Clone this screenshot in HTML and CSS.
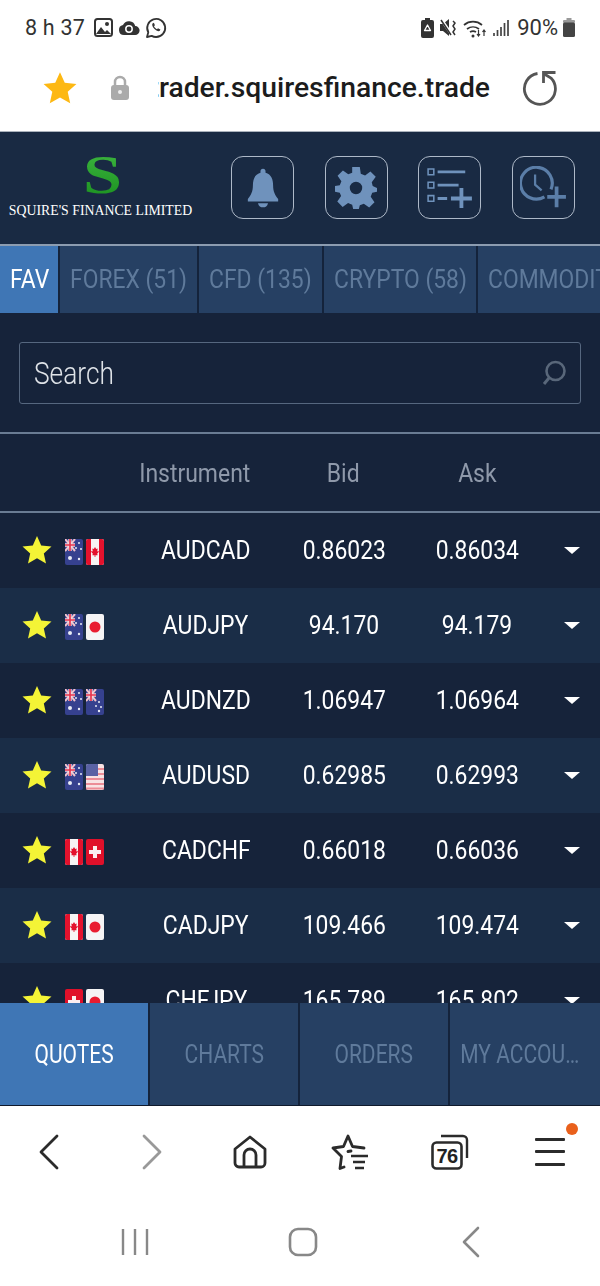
FILE: index.html
```html
<!DOCTYPE html>
<html lang="en">
<head>
<meta charset="utf-8">
<title>Squire's Finance Limited</title>
<link rel="stylesheet" href="styles.css">
</head>
<body>
<svg class="defs" width="0" height="0" aria-hidden="true">
  <defs>
    <symbol id="star" viewBox="0 0 30 30"><path d="M15 1l4.200 9.400 10.300 1.100-7.700 6.900 2.200 10.100L15 23.300 6 28.500l2.200-10.100L.5 11.500l10.300-1.100z"/></symbol>
    <symbol id="au" viewBox="0 0 18 26"><rect width="18" height="26" rx="2" fill="#36418f"/><path d="M0 0l10 12M10 0L0 12" stroke="#f2c4cc" stroke-width="2"/><path d="M5 0v12M0 6h10" stroke="#f4dbe0" stroke-width="3.400"/><path d="M5 0v12M0 6h10" stroke="#e8364f" stroke-width="1.700"/><g fill="#e8ebf5"><circle cx="5" cy="19" r="2"/><circle cx="14" cy="4" r="1"/><circle cx="11" cy="9" r="1"/><circle cx="16" cy="10" r="1"/><circle cx="14" cy="20" r="1.200"/></g></symbol>
    <symbol id="nz" viewBox="0 0 18 26"><rect width="18" height="26" rx="2" fill="#36418f"/><path d="M0 0l10 12M10 0L0 12" stroke="#f2c4cc" stroke-width="2"/><path d="M5 0v12M0 6h10" stroke="#f4dbe0" stroke-width="3.400"/><path d="M5 0v12M0 6h10" stroke="#e8364f" stroke-width="1.700"/><g fill="#e8ebf5"><circle cx="13" cy="13" r="1"/><circle cx="10" cy="17" r="1"/><circle cx="15" cy="18" r="1"/><circle cx="13" cy="22" r="1.200"/></g></symbol>
    <symbol id="ca" viewBox="0 0 18 26"><rect width="18" height="26" rx="2" fill="#f7f5f5"/><path d="M0 2a2 2 0 012-2h3v26H2a2 2 0 01-2-2zM13 0h3a2 2 0 012 2v22a2 2 0 01-2 2h-3z" fill="#e4122d"/><path d="M9 8l1.200 2 1.500-.6-.5 3 1.800-.6-.8 2-1 .8.4 1.600H9.400V18h-.8v-1.800H6.400l.4-1.600-1-.8-.8-2 1.800.6-.5-3 1.500.6z" fill="#e4122d"/></symbol>
    <symbol id="jp" viewBox="0 0 18 26"><rect width="18" height="26" rx="2" fill="#f5f4f5"/><circle cx="9" cy="13" r="5.500" fill="#e91c30"/></symbol>
    <symbol id="ch" viewBox="0 0 18 26"><rect width="18" height="26" rx="2" fill="#e0102a"/><path d="M7 7h4v4h4v4h-4v4H7v-4H3v-4h4z" fill="#fbeef0"/></symbol>
    <symbol id="us" viewBox="0 0 18 26"><rect width="18" height="26" rx="2" fill="#f8e3e4"/><path d="M0 5h18M0 10h18M0 15h18M0 20h18M0 24.500h18" stroke="#ec8d97" stroke-width="2"/><path d="M0 2a2 2 0 012-2h10v12H0z" fill="#5a62a4"/></symbol>
  </defs>
</svg>
<div class="status">
  <div class="status-side left">
    <span class="clock">8 h 37</span>
    <svg class="si" width="19" height="19" viewBox="0 0 19 19"><rect x="1" y="1" width="17" height="17" rx="2.500" fill="none" stroke="#333" stroke-width="2"/><path d="M2 16l5-7 4 5 2-2 4 4z" fill="#333"/><circle cx="13" cy="6" r="2" fill="#333"/></svg>
    <svg class="si" width="22" height="17" viewBox="0 0 22 17"><path d="M6 16a5 5 0 01-1-9.900A6.500 6.500 0 0117.200 7 4.500 4.500 0 0117 16z" fill="#333"/><circle cx="11" cy="10" r="3.200" fill="none" stroke="#fff" stroke-width="1.500"/></svg>
    <svg class="si" width="22" height="22" viewBox="0 0 22 22"><path d="M2 20l1.300-4.700A9 9 0 1111 20a9 9 0 01-4.300-1.100z" fill="none" stroke="#333" stroke-width="1.800" stroke-linejoin="round"/><path d="M7.500 6.500c-1 1.500.5 4 2 5.500s4 2.800 5.300 1.800l.6-1.300-2.400-1.200-1 1c-1-.4-2.500-1.800-3-3l.9-1-1-2.500z" fill="#333"/></svg>
  </div>
  <div class="status-side">
    <svg class="si" width="13" height="20" viewBox="0 0 13 20"><path d="M4 0h5v2h2a2 2 0 012 2v14a2 2 0 01-2 2H2a2 2 0 01-2-2V4a2 2 0 012-2h2z" fill="#333"/><path d="M6.500 7l3 5.500h-6z" fill="none" stroke="#fff" stroke-width="1.300" stroke-linejoin="round"/></svg>
    <svg class="si" width="17" height="19" viewBox="0 0 17 19"><path d="M0 6h3l6-5v17l-6-5H0z" fill="#333"/><path d="M1 1l11 16" fill="none" stroke="#fff" stroke-width="3"/><path d="M1 2l10 15" fill="none" stroke="#333" stroke-width="1.500"/><path d="M13 3l2 2-2 3 2 3-2 3 2 3" fill="none" stroke="#333" stroke-width="1.500"/></svg>
    <svg class="si" width="24" height="20" viewBox="0 0 24 20"><path d="M1 7a14 14 0 0118 0M4 11a10 10 0 0112 0M7 14a5.500 5.500 0 016 0" fill="none" stroke="#333" stroke-width="1.700"/><circle cx="10" cy="18" r="1.500" fill="#333"/><path d="M15.500 12v6M14 16l1.500 2 1.500-2M21 18v-6M19.500 14l1.500-2 1.500 2" fill="none" stroke="#333" stroke-width="1.200"/></svg>
    <svg class="si" width="16" height="18" viewBox="0 0 16 18"><path d="M1 14v3M4.500 11v6M8 8v9M11.500 4v13M15 1v16" stroke="#444" stroke-width="1.700"/></svg>
    <span class="pct">90%</span>
    <svg class="si" width="12" height="19" viewBox="0 0 12 19"><rect x="3.500" width="5" height="3" fill="#999"/><rect y="2" width="12" height="3" rx="1" fill="#999"/><rect y="4.500" width="12" height="14.500" rx="1.500" fill="#444"/></svg>
  </div>
</div>
<div class="urlbar">
  <svg class="fav-star" width="36" height="34" viewBox="0 0 30 30"><use href="#star"/></svg>
  <svg class="lock" width="20" height="26" viewBox="0 0 20 26"><path d="M5 11V7a5 5 0 0110 0v4" fill="none" stroke="#aaa" stroke-width="2.500"/><rect x="1" y="10" width="18" height="15" rx="3" fill="#aaa"/><circle cx="10" cy="17" r="2" fill="#eee"/></svg>
  <div class="url"><span>trader.squiresfinance.trade</span></div>
  <svg class="reload" width="36" height="36" viewBox="0 0 36 36"><path d="M15.500 3.500A15.500 15.500 0 1029 8L21.500 3.500" fill="none" stroke="#555" stroke-width="2.800"/><path d="M33.500 2.500H21.500V13" fill="none" stroke="#555" stroke-width="2.800"/></svg>
</div>
<main class="app">
  <header class="app-head">
    <div class="logo">
      <div class="logo-s">S</div>
      <div class="logo-name">SQUIRE'S FINANCE LIMITED</div>
    </div>
    <div class="tools">
      <button class="tool"><svg width="32" height="42" viewBox="0 0 38 46"><path d="M19 0a3 3 0 013 3v2c7 2 9 8 9 15 0 7 2 11 6 16v3H1v-3c4-5 6-9 6-16 0-7 2-13 9-15V3a3 3 0 013-3zM13 41h12c-1 4-3 5-6 5s-5-1-6-5z" fill="#6f92bc"/></svg></button>
      <button class="tool"><svg width="42" height="42" viewBox="0 0 44 44"><path fill-rule="evenodd" d="M18 0h8l1 7 4.500 1.900 5.600-4.200 5.600 5.600-4.200 5.600L39.500 20l4.500 2v4l-5 1-1.600 4.200 4 5.600-5.600 5.600-5.600-4-4.200 1.600L25 44h-6l-1-4.500-4.300-1.700-5.700 4-5.600-5.600 4-5.700L5 27l-5-1v-6l5-1 1.700-4.200-4-5.600L8.300 3.600l5.600 4L18 6zM22 15.500a6.500 6.500 0 100 13 6.500 6.500 0 000-13z" fill="#6f92bc"/></svg></button>
      <button class="tool"><svg width="46" height="40" viewBox="0 0 48 42"><g fill="none" stroke="#6f92bc"><path d="M1 1h6v6H1zM1 15h6v6H1zM1 29h6v6H1z" stroke-width="1.600"/><path d="M11 4h29M11 18h22M11 32h10" stroke-width="3"/><path d="M25 32h22M36 21v21" stroke-width="4"/></g></svg></button>
      <button class="tool"><svg width="47" height="43" viewBox="0 0 50 46"><g fill="none" stroke="#5b7ea8"><path d="M33 25A17 17 0 1026 33" stroke-width="3.400"/><path d="M16 9v11l7 6" stroke-width="2.400"/><path d="M29 33h20M39 22v22" stroke-width="4"/></g></svg></button>
    </div>
  </header>
  <nav class="tabs">
    <div class="tab on"><span class="c">FAV</span></div>
    <div class="tab"><span class="c">FOREX (51)</span></div>
    <div class="tab"><span class="c">CFD (135)</span></div>
    <div class="tab"><span class="c">CRYPTO (58)</span></div>
    <div class="tab"><span class="c">COMMODITIES (24)</span></div>
  </nav>
  <section class="search-wrap">
    <div class="search">
      <span class="c search-text">Search</span>
      <svg width="28" height="28" viewBox="0 0 28 28"><circle cx="15.500" cy="12" r="9" fill="none" stroke="#59677a" stroke-width="2.600"/><path d="M9 19l-5 6" stroke="#59677a" stroke-width="3"/></svg>
    </div>
  </section>
  <div class="thead">
    <div class="th-instr"><span class="c">Instrument</span></div>
    <div><span class="c">Bid</span></div>
    <div><span class="c">Ask</span></div>
  </div>
  <div class="rows">
    <div class="row">
      <svg class="rstar"><use href="#star"/></svg>
      <div class="flags"><svg class="flag"><use href="#au"/></svg><svg class="flag"><use href="#ca"/></svg></div>
      <div><span class="c">AUDCAD</span></div><div><span class="c">0.86023</span></div><div><span class="c">0.86034</span></div><div class="more"><i class="tri"></i></div>
    </div>
    <div class="row">
      <svg class="rstar"><use href="#star"/></svg>
      <div class="flags"><svg class="flag"><use href="#au"/></svg><svg class="flag"><use href="#jp"/></svg></div>
      <div><span class="c">AUDJPY</span></div><div><span class="c">94.170</span></div><div><span class="c">94.179</span></div><div class="more"><i class="tri"></i></div>
    </div>
    <div class="row">
      <svg class="rstar"><use href="#star"/></svg>
      <div class="flags"><svg class="flag"><use href="#au"/></svg><svg class="flag"><use href="#nz"/></svg></div>
      <div><span class="c">AUDNZD</span></div><div><span class="c">1.06947</span></div><div><span class="c">1.06964</span></div><div class="more"><i class="tri"></i></div>
    </div>
    <div class="row">
      <svg class="rstar"><use href="#star"/></svg>
      <div class="flags"><svg class="flag"><use href="#au"/></svg><svg class="flag"><use href="#us"/></svg></div>
      <div><span class="c">AUDUSD</span></div><div><span class="c">0.62985</span></div><div><span class="c">0.62993</span></div><div class="more"><i class="tri"></i></div>
    </div>
    <div class="row">
      <svg class="rstar"><use href="#star"/></svg>
      <div class="flags"><svg class="flag"><use href="#ca"/></svg><svg class="flag"><use href="#ch"/></svg></div>
      <div><span class="c">CADCHF</span></div><div><span class="c">0.66018</span></div><div><span class="c">0.66036</span></div><div class="more"><i class="tri"></i></div>
    </div>
    <div class="row">
      <svg class="rstar"><use href="#star"/></svg>
      <div class="flags"><svg class="flag"><use href="#ca"/></svg><svg class="flag"><use href="#jp"/></svg></div>
      <div><span class="c">CADJPY</span></div><div><span class="c">109.466</span></div><div><span class="c">109.474</span></div><div class="more"><i class="tri"></i></div>
    </div>
    <div class="row">
      <svg class="rstar"><use href="#star"/></svg>
      <div class="flags"><svg class="flag"><use href="#ch"/></svg><svg class="flag"><use href="#jp"/></svg></div>
      <div><span class="c">CHFJPY</span></div><div><span class="c">165.789</span></div><div><span class="c">165.802</span></div><div class="more"><i class="tri"></i></div>
    </div>
  </div>
  <nav class="bottom-tabs">
    <div class="btab on"><span class="c">QUOTES</span></div>
    <div class="btab"><span class="c">CHARTS</span></div>
    <div class="btab"><span class="c">ORDERS</span></div>
    <div class="btab"><span class="c">MY ACCOU…</span></div>
  </nav>
</main>
<div class="browser-nav">
  <svg class="nav-back" width="20" height="36" viewBox="0 0 20 36"><path d="M18 2L2 18l16 16" fill="none" stroke="#2b2b2b" stroke-width="2.800" stroke-linecap="round" stroke-linejoin="round"/></svg>
  <svg class="nav-fwd" width="20" height="36" viewBox="0 0 20 36"><path d="M2 2l16 16L2 34" fill="none" stroke="#999" stroke-width="2.800" stroke-linecap="round" stroke-linejoin="round"/></svg>
  <svg width="34" height="34" viewBox="0 0 34 34"><path d="M2 14L17 2l15 12v14a4 4 0 01-4 4H6a4 4 0 01-4-4z" fill="none" stroke="#2b2b2b" stroke-width="2.800" stroke-linejoin="round"/><path d="M11 32V20a6 6 0 0112 0v12" fill="none" stroke="#2b2b2b" stroke-width="2.800"/></svg>
  <svg width="38" height="36" viewBox="0 0 38 36"><path d="M20 17l-3 .5M13 33l-4 1.500 1.500-12L2 14l10.500-1.500L17 2l4.500 10.500L33 14" fill="none" stroke="#2b2b2b" stroke-width="2.800" stroke-linecap="round" stroke-linejoin="round"/><path d="M20 22h17M22 28h12M24 34h9" stroke="#2b2b2b" stroke-width="2.600"/></svg>
  <div class="tabcount">
    <svg width="38" height="36" viewBox="0 0 38 36"><path d="M10 2h22a4 4 0 014 4v18" fill="none" stroke="#2b2b2b" stroke-width="2.400"/><rect x="1.500" y="8.500" width="29" height="26" rx="4" fill="#fff" stroke="#2b2b2b" stroke-width="2.600"/></svg>
    <span class="tabnum">76</span>
  </div>
  <div class="menu">
    <i></i><i></i><i></i>
    <b class="dot"></b>
  </div>
</div>
<div class="sys-nav">
  <svg width="28" height="28" viewBox="0 0 28 28"><path d="M2 1v26M14 1v26M26 1v26" stroke="#888" stroke-width="2.400"/></svg>
  <svg width="30" height="30" viewBox="0 0 30 30"><rect x="2" y="2" width="26" height="26" rx="8" fill="none" stroke="#888" stroke-width="2.600"/></svg>
  <svg width="18" height="32" viewBox="0 0 18 32"><path d="M16 2L2 16l14 14" fill="none" stroke="#888" stroke-width="2.600" stroke-linecap="round" stroke-linejoin="round"/></svg>
</div>
</body>
</html>
```
FILE: styles.css
```css
* { box-sizing: border-box; }
html, body { margin: 0; padding: 0; }
body {
  width: 600px;
  height: 1286px;
  overflow: hidden;
  background: #fff;
  font-family: Roboto, "Liberation Sans", sans-serif;
  display: flex;
  flex-direction: column;
}
.defs { position: absolute; }
.c { display: inline-block; transform: scaleX(.88); white-space: nowrap; }

.status {
  height: 52px;
  padding: 3px 25px 0 25px;
  display: flex;
  justify-content: space-between;
  align-items: center;
  color: #333;
  flex: none;
}
.status-side { display: flex; align-items: center; gap: 6px; }
.status-side.left { gap: 5px; }
.clock { font-size: 21.500px; margin-right: 4px; letter-spacing: .2px; }
.pct { font-size: 22px; margin: 0 -1px 0 2px; }
.si { display: block; }

.urlbar {
  height: 79px;
  flex: none;
  padding: 0 42px 8px 42px;
  display: flex;
  align-items: center;
}
.fav-star { fill: #fdb813; flex: none; }
.lock { margin-left: 32px; flex: none; }
.url {
  width: 332px;
  margin-left: 28px;
  overflow: hidden;
  display: flex;
  justify-content: flex-end;
  font-size: 28.300px;
  font-weight: 500;
  color: #1c1c1c;
  white-space: nowrap;
}
.url span { flex: none; }
.reload { margin-left: 32px; flex: none; }

.app {
  flex: none;
  height: 975px;
  display: flex;
  flex-direction: column;
  background: #16233a;
  border-top: 1px solid #aab2bc;
}
.app-head {
  height: 114px;
  flex: none;
  background: #192a43;
  border-bottom: 2px solid #8c9cb0;
  display: flex;
  align-items: flex-start;
}
.logo { width: 201px; flex: none; text-align: center; padding-top: 18px; }
.logo-s {
  font-family: "Liberation Serif", serif;
  font-size: 54px;
  font-weight: 700;
  line-height: 50px;
  height: 52px;
  transform: translateX(2px) scaleX(1.300);
  background: linear-gradient(180deg, #3cb53f, #1a8f1f);
  -webkit-background-clip: text;
  background-clip: text;
  color: transparent;
}
.logo-name {
  font-family: "Liberation Serif", serif;
  font-size: 13.800px;
  line-height: 18px;
  color: #fff;
  white-space: nowrap;
}
.tools { display: flex; gap: 30.500px; padding: 24px 0 0 30px; }
.tool {
  width: 63px;
  height: 63px;
  padding: 0;
  background: transparent;
  border: 1.500px solid #aeb9c8;
  border-radius: 12px;
  display: flex;
  align-items: center;
  justify-content: center;
}

.tabs {
  height: 67px;
  flex: none;
  display: grid;
  grid-template-columns: 58px 137px 123px 152px 1fr;
  gap: 2px;
  background: #14233b;
  overflow: hidden;
}
.tab {
  background: #264063;
  color: #5f7a9b;
  font-size: 26px;
  line-height: 67px;
  padding-left: 10px;
  overflow: hidden;
  white-space: nowrap;
}
.tab .c { transform-origin: left center; }
.tab.on { background: #3f76b5; color: #fff; }

.search-wrap { height: 121px; flex: none; padding: 29px 19px 0; border-bottom: 2px solid #6a7c93; }
.search {
  height: 62px;
  border: 1.500px solid #56677f;
  border-radius: 3px;
  padding: 0 12px 0 14px;
  display: flex;
  align-items: center;
  justify-content: space-between;
}
.search-text { font-size: 31px; font-weight: 300; color: #dfe3e8; transform: scaleX(.85); transform-origin: left center; }

.thead {
  height: 79px;
  flex: none;
  border-bottom: 2px solid #6a7c93;
  display: grid;
  grid-template-columns: 113px 164px 132px 136px 1fr;
  align-items: center;
  font-size: 25.500px;
  color: #8f99aa;
  text-align: center;
}
.th-instr { grid-column: 2; }
.thead .c { transform: scaleX(.9); }

.rows { flex: 1; min-height: 0; overflow: hidden; }
.row {
  height: 75px;
  padding-bottom: 2px;
  display: grid;
  grid-template-columns: 65px 66px 150px 126px 140px 1fr;
  align-items: center;
  background: #16233a;
  color: #fff;
  font-size: 26px;
  text-align: center;
}
.row:nth-child(even) { background: #1a2d47; }
.rstar { width: 30px; height: 30px; fill: #f4f436; margin-left: 22px; }
.flags { display: flex; gap: 3px; margin-top: 4px; }
.flag { width: 18px; height: 26px; flex: none; display: block; }
.more { display: flex; justify-content: flex-end; padding-right: 20px; margin-top: 2px; }
.tri {
  width: 0; height: 0;
  border-left: 8px solid transparent;
  border-right: 8px solid transparent;
  border-top: 7px solid #fff;
}

.bottom-tabs {
  height: 103px;
  flex: none;
  display: grid;
  grid-template-columns: repeat(4, 1fr);
  background: #14233b;
  border-bottom: 1px solid #101a2c;
}
.btab {
  background: #264063;
  color: #5f7a9b;
  border-right: 2px solid #14233b;
  font-size: 25px;
  display: flex;
  align-items: center;
  justify-content: center;
  white-space: nowrap;
  overflow: hidden;
}
.btab .c { transform: scaleX(.84); }
.btab:last-child { border-right: 0; padding-right: 10px; }
.btab.on { background: #3f76b5; color: #fff; }

.browser-nav {
  height: 91px;
  flex: none;
  display: grid;
  grid-template-columns: repeat(6, 100px);
  justify-items: center;
  align-items: center;
}
.nav-back { margin-right: 2px; }
.nav-fwd { margin-left: 4px; }
.tabcount { position: relative; width: 38px; height: 36px; }
.tabnum {
  position: absolute;
  left: 1px;
  top: 8px;
  width: 30px;
  text-align: center;
  font-family: "Liberation Sans", sans-serif;
  font-size: 20px;
  font-weight: 700;
  line-height: 28px;
  color: #222;
  letter-spacing: -.5px;
}
.menu {
  position: relative;
  width: 30px;
  height: 28px;
  display: flex;
  flex-direction: column;
  justify-content: space-between;
}
.menu i { display: block; height: 3px; background: #2b2b2b; border-radius: 1px; }
.dot {
  position: absolute;
  right: -13px;
  top: -15px;
  width: 12px;
  height: 12px;
  border-radius: 50%;
  background: #e9601b;
}

.sys-nav {
  flex: 1;
  padding-left: 51px;
  display: grid;
  grid-template-columns: repeat(3, 168px);
  justify-items: center;
  align-items: center;
}
```
